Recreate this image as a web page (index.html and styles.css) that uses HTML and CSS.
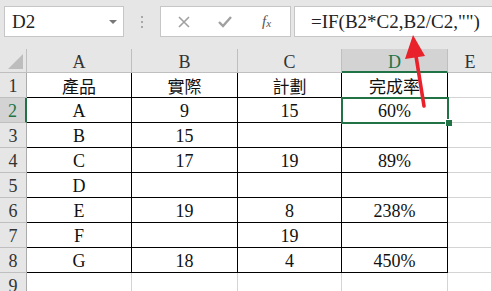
FILE: index.html
```html
<html>
	<head>
		<title>Sheet | D2</title>
		<link rel="stylesheet" href="styles.css">
	</head>
	<body>
		<div class="toolbar">
			<div class="namebox">D2<span class="drop"></span></div>
			<div class="dots"><i></i><i></i><i></i></div>
			<div class="funcs">
				<svg class="ico" width="12" height="12" viewBox="0 0 12 12"><path d="M1 1L11 11M11 1L1 11" stroke="#a0a0a0" stroke-width="1.6"/></svg>
				<svg class="ico" width="14" height="12" viewBox="0 0 14 12"><path d="M1 6L5 10L13 1" stroke="#a0a0a0" stroke-width="2.4" fill="none"/></svg>
				<span class="fx">f<sub>x</sub></span>
			</div>
			<div class="formula">=IF(B2*C2,B2/C2,"")</div>
		</div>
		<div class="sheet">
			<div class="hd corner"><span class="tri"></span></div>
			<div class="hd col">A</div><div class="hd col">B</div><div class="hd col">C</div><div class="hd col on">D</div><div class="hd col last">E</div>

			<div class="hd row">1</div><div class="c cjk">產品</div><div class="c cjk">實際</div><div class="c cjk">計劃</div><div class="c cjk">完成率</div><div class="g"></div>
			<div class="hd row on">2</div><div class="c">A</div><div class="c">9</div><div class="c">15</div><div class="c">60%</div><div class="g"></div>
			<div class="hd row">3</div><div class="c">B</div><div class="c">15</div><div class="c"></div><div class="c"></div><div class="g"></div>
			<div class="hd row">4</div><div class="c">C</div><div class="c">17</div><div class="c">19</div><div class="c">89%</div><div class="g"></div>
			<div class="hd row">5</div><div class="c">D</div><div class="c"></div><div class="c"></div><div class="c"></div><div class="g"></div>
			<div class="hd row">6</div><div class="c">E</div><div class="c">19</div><div class="c">8</div><div class="c">238%</div><div class="g"></div>
			<div class="hd row">7</div><div class="c">F</div><div class="c"></div><div class="c">19</div><div class="c"></div><div class="g"></div>
			<div class="hd row">8</div><div class="c">G</div><div class="c">18</div><div class="c">4</div><div class="c">450%</div><div class="g"></div>
			<div class="hd row">9</div><div class="g"></div><div class="g"></div><div class="g"></div><div class="g"></div><div class="g"></div>

			<div class="sel"><span class="handle"></span></div>
		</div>
		<svg class="arrow" width="492" height="291" viewBox="0 0 492 291">
			<path d="M416 56L424 106" stroke="#e8212b" stroke-width="3.6" stroke-linecap="round"/>
			<polygon points="413,35 405,59 425,56" fill="#e8212b"/>
		</svg>
	</body>
</html>
```

FILE: styles.css
```css
body {
	margin: 0;
	width: 492px;
	height: 291px;
	overflow: hidden;
	position: relative;
	background: #fff;
	font-family: "Liberation Serif", "Times New Roman", "DejaVu Serif", serif;
	color: #111;
}
.toolbar {
	height: 49px;
	background: #e6e6e6;
	display: flex;
	align-items: flex-start;
	padding: 6px 0 0 4px;
	box-sizing: border-box;
}
.namebox {
	width: 120px;
	height: 31px;
	box-sizing: border-box;
	background: #fff;
	border: 1px solid #c6c6c6;
	font-size: 19px;
	line-height: 30px;
	padding-left: 7px;
	position: relative;
	color: #222;
}
.drop {
	position: absolute;
	right: 6px;
	top: 13px;
	border-left: 4px solid transparent;
	border-right: 4px solid transparent;
	border-top: 4px solid #777;
}
.dots {
	width: 36px;
	display: flex;
	flex-direction: column;
	align-items: center;
	gap: 3px;
	padding-top: 10px;
}
.dots i {
	width: 2px;
	height: 2px;
	background: #a8a8a8;
}
.funcs {
	width: 131px;
	height: 31px;
	box-sizing: border-box;
	background: #fff;
	border: 1px solid #c6c6c6;
	display: flex;
	align-items: center;
	padding-left: 17px;
	gap: 28px;
}
.fx {
	font-style: italic;
	font-size: 15px;
	color: #555;
	margin-left: 2px;
}
.fx sub {
	font-size: 11px;
	vertical-align: -1px;
}
.formula {
	flex: 1;
	margin-left: 3px;
	height: 31px;
	box-sizing: border-box;
	background: #fff;
	border: 1px solid #c6c6c6;
	border-right: 0;
	font-size: 19px;
	line-height: 30px;
	padding-left: 16px;
	color: #222;
}
.sheet {
	display: grid;
	grid-template-columns: 27px 105px 106px 104px 106px 1fr;
	grid-template-rows: 24px;
	grid-auto-rows: 25px;
	position: relative;
	font-size: 18px;
	text-align: center;
	line-height: 25px;
}
.hd {
	background: #e6e6e6;
	color: #333;
	box-sizing: border-box;
	border-right: 1px solid #bfbfbf;
	border-bottom: 1px solid #bfbfbf;
}
.col {
	line-height: 26px;
}
.row {
	border-right-color: #ababab;
	padding-top: 1px;
}
.hd.last {
	border-right: 0;
}
.hd.on {
	background: #d3d3d3;
	color: #217346;
}
.col.on {
	border-bottom: 2px solid #217346;
}
.row.on {
	border-right: 2px solid #217346;
}
.corner {
	position: relative;
}
.tri {
	position: absolute;
	right: 3px;
	bottom: 3px;
	border-left: 15px solid transparent;
	border-bottom: 15px solid #bdbdbd;
}
.c {
	box-sizing: border-box;
	border-right: 1px solid #000;
	border-bottom: 1px solid #000;
	padding-top: 1px;
}
.cjk {
	font-family: "Noto Sans CJK TC", sans-serif;
	font-size: 17px;
	line-height: 23px;
}
.g {
	box-sizing: border-box;
	border-right: 1px solid #d4d4d4;
	border-bottom: 1px solid #d4d4d4;
}
.sel {
	position: absolute;
	left: 341px;
	top: 48px;
	width: 108px;
	height: 27px;
	box-sizing: border-box;
	border: 2px solid #217346;
}
.handle {
	position: absolute;
	right: -5px;
	bottom: -4px;
	width: 6px;
	height: 6px;
	background: #217346;
	border: 1px solid #fff;
	border-right: 0;
	border-bottom: 0;
}
.arrow {
	position: absolute;
	left: 0;
	top: 0;
}
```
